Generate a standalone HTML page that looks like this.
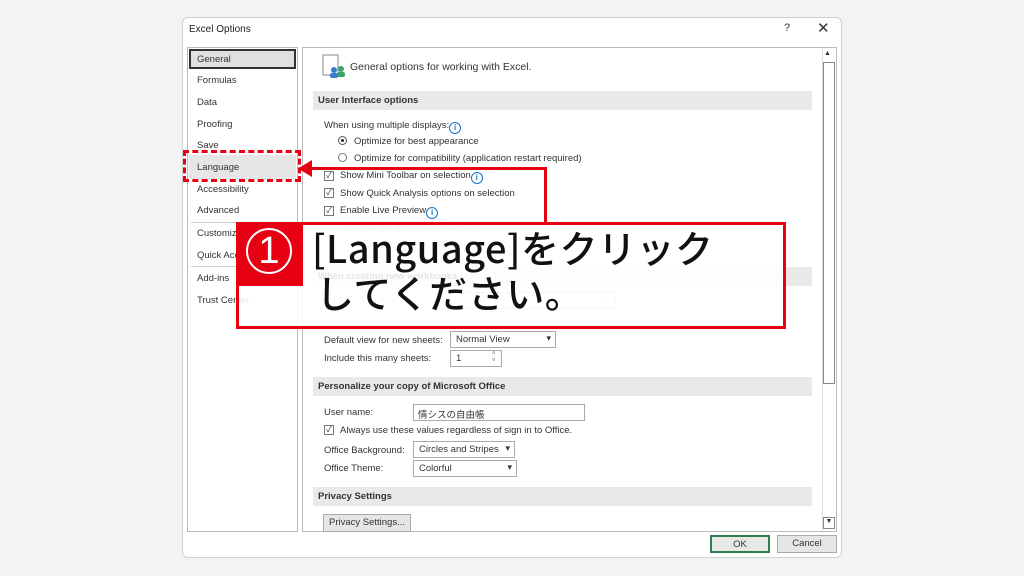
<!DOCTYPE html>
<html><head><meta charset="utf-8"><style>
*{margin:0;padding:0;box-sizing:border-box}
body{width:1024px;height:576px;background:#f3f3f3;position:relative;overflow:hidden;font-family:"Liberation Sans","Noto Sans CJK JP",sans-serif;font-size:9.5px;color:#333}
.a{position:absolute;white-space:nowrap}
.dlg{position:absolute;left:182px;top:17px;width:660px;height:541px;background:#fff;border:1px solid #d0d0d0;border-radius:6px}
.nav{position:absolute;left:187px;top:47px;width:111px;height:485px;border:1px solid #bbb;background:#fff}
.main{position:absolute;left:302px;top:47px;width:535px;height:485px;border:1px solid #bbb;background:#fff}
.sec{position:absolute;left:313px;width:499px;height:19px;background:#e9e9e9;font-weight:bold;padding:4px 5px;font-size:9.5px}
.cb{position:absolute;width:10px;height:10px;border:1px solid #777;font-size:8px;line-height:8px;text-align:center}
.info{display:inline-block;width:12px;height:12px;border:1.5px solid #1a73c8;border-radius:50%;color:#1a73c8;font-size:8px;line-height:9px;text-align:center;font-weight:bold;vertical-align:-2px}
.dd{position:absolute;height:17px;border:1px solid #aaa;padding:2px 5px;background:#fff}
.dd:after{content:"▾";position:absolute;right:4px;top:1px;font-size:9px}
.btn{position:absolute;height:18px;border:1px solid #aaa;background:#e5e5e5;text-align:center;line-height:16px}
</style></head><body>
<div class="dlg"></div>
<div class="a" style="left:189px;top:24px;font-size:10px;color:#222">Excel Options</div>
<div class="a" style="left:784px;top:22px;font-size:11px">?</div>
<div class="a" style="left:817px;top:19px;font-size:15px">✕</div>
<div class="nav"></div>
<div class="a" style="left:189px;top:49px;width:107px;height:20px;background:#e0e0e0;border:2px solid #333"></div>
<div class="a" style="left:197px;top:54px">General</div>
<div class="a" style="left:197px;top:75px">Formulas</div>
<div class="a" style="left:197px;top:97px">Data</div>
<div class="a" style="left:197px;top:119px">Proofing</div>
<div class="a" style="left:197px;top:140px">Save</div>
<div class="a" style="left:189px;top:155px;width:107px;height:24px;background:#e6e6e6"></div>
<div class="a" style="left:197px;top:162px">Language</div>
<div class="a" style="left:197px;top:184px">Accessibility</div>
<div class="a" style="left:197px;top:205px">Advanced</div>
<div class="a" style="left:191px;top:222px;width:103px;height:1px;background:#ccc"></div>
<div class="a" style="left:197px;top:228px">Customize Ribbon</div>
<div class="a" style="left:197px;top:250px">Quick Access</div>
<div class="a" style="left:191px;top:266px;width:103px;height:1px;background:#ccc"></div>
<div class="a" style="left:197px;top:273px">Add-ins</div>
<div class="a" style="left:197px;top:295px">Trust Center</div>
<div class="main"></div>
<div class="a" style="left:822px;top:48px;width:14px;height:483px;border-left:1px solid #ddd;background:#fff"></div>
<div class="a" style="left:823px;top:62px;width:12px;height:322px;border:1px solid #888;background:#fff"></div>
<div class="a" style="left:824px;top:50px;font-size:7px">▲</div>
<div class="a" style="left:823px;top:517px;width:12px;height:12px;border:1px solid #888;font-size:7px;text-align:center">▼</div>
<svg class="a" style="left:322px;top:54px" width="24" height="26"><rect x="1" y="1" width="15" height="20" fill="#fff" stroke="#888"/><circle cx="12" cy="16" r="3" fill="#3a7cc8"/><circle cx="19" cy="15" r="3" fill="#3aa36a"/><rect x="8" y="19" width="8" height="5" rx="2" fill="#3a7cc8"/><rect x="15" y="18" width="8" height="5" rx="2" fill="#3aa36a"/></svg>
<div class="a" style="left:350px;top:61px;font-size:10.5px">General options for working with Excel.</div>
<div class="sec" style="top:91px">User Interface options</div>
<div class="a" style="left:324px;top:120px">When using multiple displays:<span class="info">i</span></div>
<div class="a" style="left:338px;top:136px;width:9px;height:9px;border:1px solid #555;border-radius:50%"></div>
<div class="a" style="left:341px;top:139px;width:3px;height:3px;background:#222;border-radius:50%"></div>
<div class="a" style="left:354px;top:136px">Optimize for best appearance</div>
<div class="a" style="left:338px;top:153px;width:9px;height:9px;border:1px solid #777;border-radius:50%"></div>
<div class="a" style="left:354px;top:153px">Optimize for compatibility (application restart required)</div>
<div class="cb" style="left:324px;top:171px">✓</div><div class="a" style="left:340px;top:170px">Show Mini Toolbar on selection<span class="info">i</span></div>
<div class="cb" style="left:324px;top:188px">✓</div><div class="a" style="left:340px;top:188px">Show Quick Analysis options on selection</div>
<div class="cb" style="left:324px;top:206px">✓</div><div class="a" style="left:340px;top:205px">Enable Live Preview<span class="info">i</span></div>
<div class="a" style="left:340px;top:223px;color:#bbb">Collapse the ribbon automatically</div>
<div class="sec" style="top:267px">When creating new workbooks</div>
<div class="dd" style="left:450px;top:292px;width:165px;color:#ccc"></div>
<div class="dd" style="left:450px;top:331px;width:106px">Normal View</div>
<div class="a" style="left:324px;top:335px">Default view for new sheets:</div>
<div class="a" style="left:324px;top:353px">Include this many sheets:</div>
<div class="a" style="left:450px;top:350px;width:52px;height:17px;border:1px solid #aaa;padding:2px 5px">1</div>
<div class="a" style="left:492px;top:351px;font-size:6px;line-height:7px;color:#666">˄<br>˅</div>
<div class="sec" style="top:377px">Personalize your copy of Microsoft Office</div>
<div class="a" style="left:324px;top:407px">User name:</div>
<div class="a" style="left:413px;top:404px;width:172px;height:17px;border:1px solid #aaa;padding:2px 4px">情シスの自由帳</div>
<div class="cb" style="left:324px;top:425px">✓</div><div class="a" style="left:340px;top:425px">Always use these values regardless of sign in to Office.</div>
<div class="a" style="left:324px;top:445px">Office Background:</div>
<div class="dd" style="left:413px;top:441px;width:102px">Circles and Stripes</div>
<div class="a" style="left:324px;top:463px">Office Theme:</div>
<div class="dd" style="left:413px;top:460px;width:104px">Colorful</div>
<div class="sec" style="top:487px">Privacy Settings</div>
<div class="btn" style="left:323px;top:514px;width:88px">Privacy Settings...</div>
<div class="btn" style="left:710px;top:535px;width:60px;border:2px solid #2e7d4f;background:#e8e8e8">OK</div>
<div class="btn" style="left:777px;top:535px;width:60px">Cancel</div>
<div class="a" style="left:183px;top:150px;width:118px;height:32px;border:3px dashed #e60012"></div>
<div class="a" style="left:308px;top:167px;width:239px;height:3px;background:#e60012"></div>
<div class="a" style="left:544px;top:167px;width:3px;height:56px;background:#e60012"></div>
<svg class="a" style="left:298px;top:160px" width="14" height="17"><polygon points="0,8.5 14,0 14,17" fill="#e60012"/></svg>
<div class="a" style="left:236px;top:222px;width:550px;height:107px;border:3px solid #e60012;background:rgba(255,255,255,0.88)"></div>
<div class="a" style="left:236px;top:222px;width:67px;height:64px;background:#e60012"></div>
<div class="a" style="left:246px;top:228px;width:46px;height:46px;border:2px solid #fff;border-radius:50%;color:#fff;font-size:38px;line-height:42px;text-align:center">1</div>
<div class="a" style="left:312px;top:225px;font-size:38px;line-height:44px;letter-spacing:0.5px;color:#111;font-weight:500;font-family:'Noto Sans CJK JP','Liberation Sans',sans-serif">[Language]をクリック</div>
<div class="a" style="left:316px;top:270px;font-size:38px;line-height:44px;letter-spacing:0.5px;color:#111;font-weight:500;font-family:'Noto Sans CJK JP',sans-serif">してください。</div>
</body></html>
